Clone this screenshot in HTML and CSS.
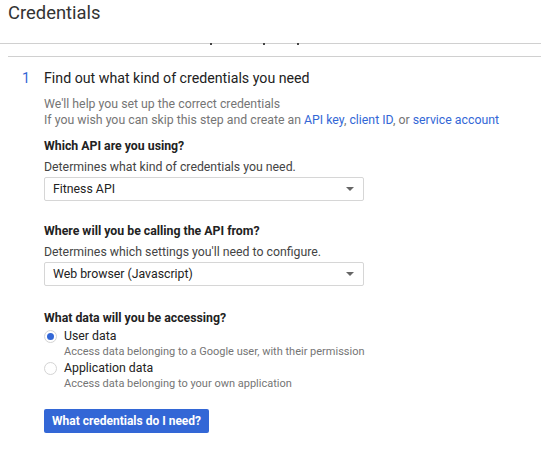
FILE: index.html
```html
<!DOCTYPE html>
<html>
<head>
<meta charset="utf-8">
<link rel="stylesheet" href="styles.css">
</head>
<body>
<header class="top">
  <h1 class="title">Credentials</h1>
</header>
<div class="tabs">
  <span class="frag f1"></span><span class="frag f2"></span><span class="frag f3"></span>
</div>
<div class="rule2"></div>
<main class="step">
  <div class="num">1</div>
  <div class="body">
    <h2 class="heading">Find out what kind of credentials you need</h2>
    <p class="intro">We'll help you set up the correct credentials<br>If you wish you can skip this step and create an <a href="#">API key</a>, <a href="#">client ID</a>, or <a href="#">service account</a></p>

    <section class="field">
      <div class="label">Which API are you using?</div>
      <div class="hint">Determines what kind of credentials you need.</div>
      <div class="select"><span>Fitness API</span><span class="caret"></span></div>
    </section>

    <section class="field">
      <div class="label">Where will you be calling the API from?</div>
      <div class="hint">Determines which settings you'll need to configure.</div>
      <div class="select"><span>Web browser (Javascript)</span><span class="caret"></span></div>
    </section>

    <section class="field radios">
      <div class="label">What data will you be accessing?</div>
      <div class="radio">
        <span class="dot on"></span>
        <div><div class="rlabel">User data</div><div class="rdesc">Access data belonging to a Google user, with their permission</div></div>
      </div>
      <div class="radio">
        <span class="dot"></span>
        <div><div class="rlabel">Application data</div><div class="rdesc">Access data belonging to your own application</div></div>
      </div>
    </section>

    <button class="btn">What credentials do I need?</button>
  </div>
</main>
</body>
</html>
```
FILE: styles.css
```css
* { box-sizing: border-box; }
body {
  margin: 0;
  font-family: Roboto, "Liberation Sans", Arial, sans-serif;
  color: #333;
  background: #fff;
}
.top { padding: 1px 8px 0; height: 36px; }
.title {
  margin: 0;
  font-size: 18.4px;
  font-weight: 400;
  color: #333;
  line-height: 24px;
}
.tabs {
  position: relative;
  height: 8px;
  border-bottom: 1px solid #d0d0d0;
}
.frag {
  position: absolute;
  bottom: -2px;
  width: 2px;
  height: 2px;
  background: #444;
}
.f1 { left: 210px; }
.f2 { left: 263px; }
.f3 { left: 297px; }
.rule2 {
  margin: 12px 0 0 8px;
  border-top: 1px solid #d0d0d0;
}
.step {
  display: flex;
  padding: 12px 0 0 22px;
}
.num {
  width: 22px;
  font-size: 14.2px;
  color: #3367d6;
  line-height: 18px;
}
.body { flex: 1; }
.heading {
  margin: 0;
  font-size: 14.2px;
  font-weight: 400;
  color: #222;
  line-height: 18px;
}
.intro {
  margin: 9px 0 0;
  font-size: 12.3px;
  line-height: 16px;
  color: #757575;
}
.intro a { color: #3367d6; text-decoration: none; }
.field { margin-top: 10px; }
.field + .field { margin-top: 22px; }
.field.radios { margin-top: 24px; }
.label {
  font-size: 12.3px;
  font-weight: 700;
  color: #222;
  line-height: 16px;
}
.hint {
  margin-top: 5px;
  font-size: 12.3px;
  color: #444;
  line-height: 16px;
}
.select {
  margin-top: 2px;
  width: 320px;
  height: 24px;
  border: 1px solid #d6d6d6;
  border-radius: 2px;
  display: flex;
  align-items: center;
  justify-content: space-between;
  padding: 0 9px 0 8px;
  font-size: 12.3px;
  color: #222;
}
.caret {
  width: 0; height: 0;
  border-left: 4px solid transparent;
  border-right: 4px solid transparent;
  border-top: 4px solid #666;
}
.radios .label { margin-bottom: 2px; }
.radio {
  display: flex;
  align-items: flex-start;
  gap: 7px;
}
.dot {
  margin-top: 2px;
  width: 13px; height: 13px;
  border-radius: 50%;
  border: 1px solid #d4d4d4;
  background: #fff;
  position: relative;
  flex: none;
}
.dot.on::after {
  content: "";
  position: absolute;
  left: 2px; top: 2px;
  width: 7px; height: 7px;
  border-radius: 50%;
  background: #3367d6;
}
.rlabel { font-size: 12.3px; color: #222; line-height: 16px; }
.rdesc { font-size: 11px; color: #757575; line-height: 16px; }
.btn {
  margin-top: 17px;
  height: 24px;
  padding: 0 8px;
  border: none;
  border-radius: 2px;
  background: #3367d6;
  color: #fff;
  font-family: Roboto, "Liberation Sans", Arial, sans-serif;
  font-size: 12px;
  font-weight: 700;
}
```
